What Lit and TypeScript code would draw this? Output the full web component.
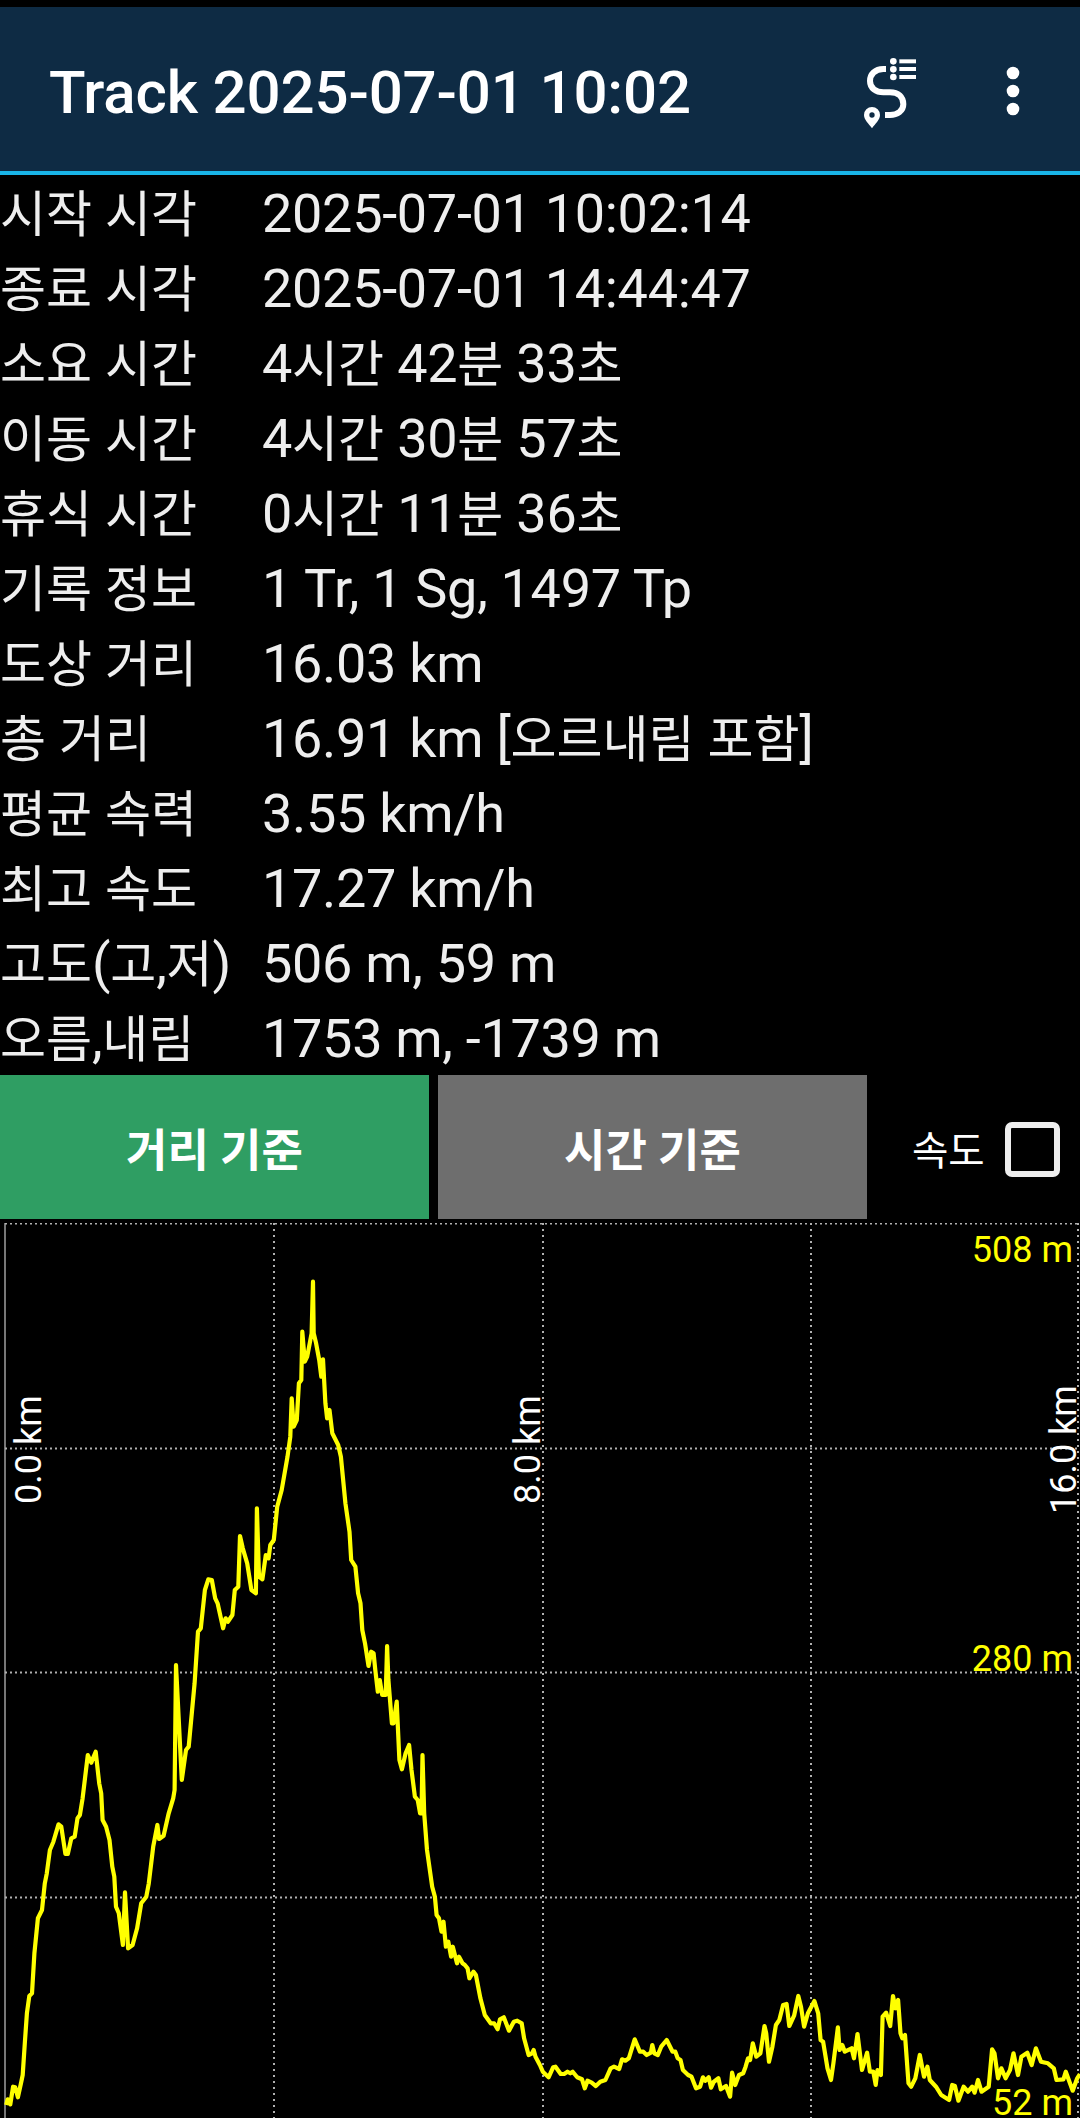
import { LitElement, html, css, svg } from "lit";
import { customElement } from "lit/decorators.js";

const rows: [string, string][] = [
  ["시작 시각", "2025-07-01 10:02:14"],
  ["종료 시각", "2025-07-01 14:44:47"],
  ["소요 시간", "4시간 42분 33초"],
  ["이동 시간", "4시간 30분 57초"],
  ["휴식 시간", "0시간 11분 36초"],
  ["기록 정보", "1 Tr, 1 Sg, 1497 Tp"],
  ["도상 거리", "16.03 km"],
  ["총 거리", "16.91 km [오르내림 포함]"],
  ["평균 속력", "3.55 km/h"],
  ["최고 속도", "17.27 km/h"],
  ["고도(고,저)", "506 m, 59 m"],
  ["오름,내림", "1753 m, -1739 m"],
];

// Traced from the reference: [x, y] in crop pixels, converted below.
const lower1 = [18,1305,22,1288,30,1303,38,1250,44,1252,52,1282,62,1235,66,1215,72,1120,78,1030,85,978,93,970,100,850,110,745,122,720,130,640,136,610,145,540,155,515,170,463,178,470,190,552,197,552,207,505,217,500,225,445,232,435,240,385,255,255,265,278,270,265,278,245,288,340,294,370,298,450,308,470,318,510,326,590,332,620,337,710,345,730,357,825,363,667,372,835,385,825,398,775,410,700,425,680,432,640,445,530,457,465,462,507,475,497,490,430,503,385,507,360,511,-15];
const lower2 = [528,330,540,240,548,230,557,130,565,40];
const upper = [575,1235,583,1225,595,1110,605,1078,615,1080,625,1135,632,1150,648,1225,655,1195,662,1205,675,1185,682,1110,692,1100,697,948,705,985,718,1030,730,1110,743,1120,746,865,752,1070,762,1078,772,1005,780,1015,785,975,795,960,805,860,818,810,835,710,843,650,847,535,853,620,862,600,868,490,875,480,878,335,885,425,892,410,905,340,909,185,911,340,918,370,927,420,933,470,938,418,945,550,950,595,957,570,965,640,982,675,990,710,1003,850,1015,935,1020,1020,1032,1040,1040,1120,1047,1150,1052,1230,1060,1270,1070,1338,1078,1295,1085,1300,1090,1350];
const lower3 = [1097,65,1103,30,1110,75,1120,75,1124,-72,1128,30,1138,160,1143,160,1152,95,1160,270,1167,298,1178,250,1188,225,1195,300,1205,380,1213,390,1220,430,1224,430,1227,255,1232,430,1240,540,1255,650,1263,680,1268,735,1275,745,1282,785,1288,755,1295,830,1302,815,1310,860,1315,830,1327,880,1333,860,1343,880,1350,885,1358,895,1363,925,1375,905,1382,915,1395,985,1408,1035,1425,1060,1435,1060,1445,1078,1452,1048,1463,1042,1478,1082,1492,1055,1502,1052,1515,1060,1522,1105,1535,1155,1545,1150,1550,1140,1555,1160,1568,1185];
const right = [8,1205,25,1222,38,1192,45,1190,60,1212,70,1212,80,1205,88,1210,95,1205,108,1222,122,1228,130,1255,138,1232,150,1238,162,1248,175,1235,190,1230,205,1195,215,1190,230,1197,238,1168,248,1172,258,1165,275,1108,290,1145,300,1145,310,1155,322,1148,326,1125,332,1150,342,1155,352,1130,368,1110,385,1145,393,1145,400,1165,408,1170,415,1200,430,1215,440,1220,453,1255,465,1250,473,1222,480,1232,490,1222,497,1253,505,1235,518,1225,525,1258,540,1248,552,1280,558,1208,567,1245,578,1215,590,1210,597,1190,604,1165,610,1170,618,1120,628,1160,640,1150,652,1068,657,1090,665,1175,675,1130,685,1065,695,1050,706,1005,716,1002,724,1068,738,1037,750,978,758,1010,767,1070,778,1030,797,993,808,1030,815,1110,822,1115,835,1195,845,1230,852,1180,865,1072,870,1140,878,1125,885,1145,905,1135,912,1165,922,1092,935,1200,950,1148,958,1205,968,1205,975,1245,980,1200,990,1215,995,1040,1005,1028,1017,1068,1025,978,1032,1015,1040,990,1047,1090,1052,1105,1060,1095,1070,1240,1078,1250,1090,1225,1103,1155,1115,1220,1125,1190,1132,1230,1150,1250,1165,1275,1188,1290,1197,1245,1205,1248,1215,1292,1230,1250,1243,1265,1255,1250,1262,1268,1272,1230,1282,1265,1303,1250,1313,1138,1320,1150,1330,1225,1340,1195,1352,1225,1365,1200,1375,1150,1388,1215,1398,1160,1415,1148,1428,1185,1440,1135,1455,1175,1475,1180,1492,1195,1500,1230,1520,1228,1527,1205,1547,1262,1560,1225,1568,1212];

const CHART_TOP = 1223;
const S = 2.904;
function conv(a: number[], ox: number, oy: number): string {
  const out: string[] = [];
  for (let i = 0; i < a.length; i += 2) {
    out.push(`${(ox + a[i] / S).toFixed(1)},${(oy + a[i + 1] / 3 - CHART_TOP).toFixed(1)}`);
  }
  return out.join(" ");
}
const points = [
  conv(lower1, 0, 1670),
  conv(lower2, 0, 1670),
  conv(upper, 0, 1220),
  conv(lower3, 0, 1670),
  conv(right, 540, 1670),
].join(" ");

const hLines = [0, 225, 449, 674];
const vLines = [274, 543, 811, 1078];

/** Hangul runs are set smaller than the Latin around them, as in the reference. */
function text(s: string) {
  return s
    .split(/([가-힣]+)/)
    .map((part) => (/[가-힣]/.test(part) ? html`<span class="ko">${part}</span>` : part));
}

@customElement("app-root")
export class AppRoot extends LitElement {
  static styles = css`
    :host {
      display: block;
      width: 1080px;
      height: 2118px;
      overflow: hidden;
      background: #000;
      font-family: Roboto, "Noto Sans CJK KR", sans-serif;
    }
    .top {
      margin-top: 7px;
      height: 164px;
      background: #0e2b44;
      border-bottom: 4px solid #19b5e8;
      display: flex;
      align-items: center;
      padding-left: 49px;
      box-sizing: content-box;
    }
    .title {
      flex: 1;
      color: #fff;
      font-size: 60px;
      font-weight: 500;
      line-height: 70px;
      letter-spacing: -0.15px;
      white-space: nowrap;
      padding-top: 7px;
    }
    .icons { display: flex; align-items: center; padding-top: 4px; }
    .route-icon { display: block; width: 80px; height: 80px; }
    .kebab { display: block; width: 26px; height: 60px; margin: 0 54px 0 60px; }
    .info { display: block; }
    .row {
      display: grid;
      grid-template-columns: 262px 1fr;
      box-sizing: border-box;
      height: 75px;
      padding-top: 3px;
      font-size: 54px;
      line-height: 72px;
      letter-spacing: -0.3px;
      color: #eeeeee;
      white-space: nowrap;
    }
    .ko { font-size: 50px; letter-spacing: 0; }
    .bar {
      display: flex;
      height: 144px;
      align-items: center;
    }
    .btn {
      width: 429px;
      height: 144px;
      display: flex;
      align-items: center;
      justify-content: center;
      color: #fff;
      font-size: 45px;
      font-weight: 700;
    }
    .green { background: #2f9e63; margin-right: 9px; }
    .grey { background: #6e6e6e; }
    .speed {
      display: flex;
      align-items: center;
      margin-left: 45px;
      color: #fff;
      font-size: 39.5px;
    }
    .check {
      width: 55px;
      height: 55px;
      box-sizing: border-box;
      border: 6px solid #eeeeee;
      border-radius: 7px;
      margin: 4px 0 0 20px;
    }
    .chart { display: block; margin-top: 4px; width: 1080px; height: 895px; }
    .lbl { font-size: 36px; font-family: Roboto, sans-serif; }
    .h { stroke: #b0b0b0; stroke-width: 2; stroke-dasharray: 2 3; }
    .v { stroke: #b0b0b0; stroke-width: 2; stroke-dasharray: 2 4; }
    .axis { stroke: #777; stroke-width: 2; }
    .trace { fill: none; stroke: #ffff00; stroke-width: 4.2; stroke-linejoin: round; }
  `;

  render() {
    return html`
      <div class="top">
        <div class="title">Track 2025-07-01 10:02</div>
        <div class="icons">
          <svg class="route-icon" viewBox="0 0 240 240" fill="#fff">
            <g transform="translate(-120 -60)">
              <path d="M198 114 H190 C165 114 150 130 150 150 C150 172 168 184 190 184 H210 C235 184 250 198 250 220 C250 240 232 252 210 252 H195" fill="none" stroke="#fff" stroke-width="18" />
              <circle cx="220" cy="91" r="10" />
              <circle cx="220" cy="115" r="10" />
              <circle cx="220" cy="138" r="10" />
              <rect x="238" y="85" width="50" height="12" />
              <rect x="238" y="108" width="50" height="12" />
              <rect x="238" y="132" width="50" height="12" />
              <path fill-rule="evenodd" d="M156 292 C146 278 132 266 132 252 A24 24 0 0 1 180 252 C180 266 166 278 156 292 Z M156 244 A8 8 0 1 0 156 260 A8 8 0 1 0 156 244 Z" />
            </g>
          </svg>
          <svg class="kebab" viewBox="0 0 26 60" fill="#fff">
            <circle cx="13" cy="12" r="6.3" />
            <circle cx="13" cy="30" r="6.3" />
            <circle cx="13" cy="48" r="6.3" />
          </svg>
        </div>
      </div>
      <div class="info">
        ${rows.map(([k, v]) => html`<div class="row"><span>${text(k)}</span><span>${text(v)}</span></div>`)}
      </div>
      <div class="bar">
        <div class="btn green">거리 기준</div>
        <div class="btn grey">시간 기준</div>
        <div class="speed">속도<div class="check"></div></div>
      </div>
      <svg class="chart" viewBox="0 0 1080 895">
        <line class="axis" x1="5" y1="0" x2="5" y2="895" />
        ${hLines.map((y) => svg`<line class="h" x1="5" y1=${y + 0.5} x2="1080" y2=${y + 0.5} />`)}
        ${vLines.map((x) => svg`<line class="v" x1=${x} y1="0" x2=${x} y2="895" />`)}
        <polyline class="trace" points=${points} />
        <text class="lbl" x="1073" y="39" text-anchor="end" fill="#ffff00">508 m</text>
        <text class="lbl" x="1073" y="448" text-anchor="end" fill="#ffff00">280 m</text>
        <text class="lbl" x="1073" y="892" text-anchor="end" fill="#ffff00">52 m</text>
        <text class="lbl" transform="translate(41 281) rotate(-90)" fill="#fff">0.0 km</text>
        <text class="lbl" transform="translate(540 281) rotate(-90)" fill="#fff">8.0 km</text>
        <text class="lbl" transform="translate(1076 291) rotate(-90)" fill="#fff">16.0 km</text>
      </svg>
    `;
  }
}
